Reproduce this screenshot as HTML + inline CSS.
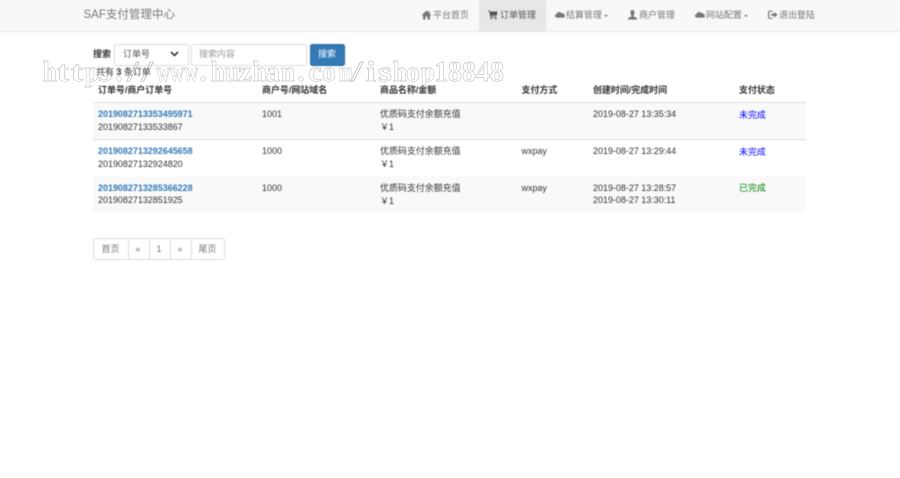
<!DOCTYPE html>
<html lang="zh-CN">
<head>
<meta charset="utf-8">
<title>订单管理</title>
<style>
html,body{margin:0;padding:0;background:#fff}
body{width:900px;height:478px;position:relative;overflow:hidden;font-family:"Liberation Sans","Noto Sans CJK SC",sans-serif;font-size:8.96px;line-height:12.8px;color:#333}
#w{position:absolute;left:0;top:0;width:900px;height:478px;filter:blur(.4px)}
.t{position:absolute;white-space:nowrap;line-height:12.8px}
.b{position:absolute;box-sizing:border-box}
.nav{color:#777}
.h{font-weight:bold}
.a{color:#337ab7;font-weight:bold}
svg{position:absolute;display:block}
.pg{color:#777;text-align:center}
#mark{position:absolute;left:42px;top:58.6px;white-space:nowrap;font-family:"Liberation Serif",serif;font-weight:bold;font-size:28px;line-height:28px;color:transparent;-webkit-text-stroke:.4px #a8a8a8;filter:blur(.15px)}
#mark span{display:inline-block;width:14px;text-align:center}
#mark .n{transform:scaleX(.92)}
#mark .v{transform:scaleX(.7)}
#mark .m{transform:scaleX(.6)}
#mark .s{transform:scaleX(1.5)}
#mark .l{transform:scaleX(1.3)}
#mark .e{transform:scaleX(1.12)}
</style>
</head>
<body>
<div id="w">
<div class="b" style="left:0;top:0;width:900px;height:32px;background:#f8f8f8;border-bottom:1px solid #e7e7e7"></div>
<div class="t" style="left:83.5px;top:9px;font-size:11.52px;color:#777">SAF支付管理中心</div>
<div class="b" style="left:479px;top:0;width:67px;height:31.5px;background:#e7e7e7"></div>

<svg style="left:421px;top:10px" width="11" height="10" viewBox="0 0 11 10"><path d="M5.5 0.5L0.5 5.2H2V9.5H4.5V6.5H6.5V9.5H9V5.2H10.5L8.5 3.3V1H7.5V2.4Z" fill="#777"/></svg>
<div class="t nav" style="left:433px;top:9px">平台首页</div>
<svg style="left:488px;top:10px" width="10" height="10" viewBox="0 0 10 10"><path d="M0 .5H1.8L2.3 1.5H9.5L8.7 5.8H3L3.2 6.7H8.6V7.6H2.4L1.2 1.4H0Z" fill="#555"/><circle cx="3.2" cy="8.7" r=".8" fill="#555"/><circle cx="7.8" cy="8.7" r=".8" fill="#555"/></svg>
<div class="t" style="left:500px;top:9px;color:#555">订单管理</div>
<svg style="left:555px;top:11px" width="10" height="8" viewBox="0 0 10 8"><path d="M2 6.6C.8 6.6 0 5.8 0 4.8 0 3.8.7 3.2 1.6 3.1 1.9 1.8 3 1 4.2 1 5.2 1 6 1.5 6.5 2.3 6.8 2.2 7 2.1 7.3 2.1 8.3 2.1 9 2.8 9 3.6 9.6 3.8 10 4.5 10 5.1 10 5.9 9.3 6.6 8.4 6.6Z" fill="#777"/></svg>
<div class="t nav" style="left:566px;top:9px">结算管理</div>
<div class="b" style="left:604px;top:15px;border-top:2.5px solid #777;border-left:2.5px solid transparent;border-right:2.5px solid transparent"></div>
<svg style="left:628px;top:10px" width="9" height="10" viewBox="0 0 9 10"><path d="M4.5 0C6 0 6.6 1.1 6.5 2.6 6.4 4 5.9 5.2 5.6 5.6V6.5L9 8V9.6H0V8L3.4 6.5V5.6C3.1 5.2 2.6 4 2.5 2.6 2.4 1.1 3 0 4.5 0Z" fill="#777"/></svg>
<div class="t nav" style="left:639px;top:9px">商户管理</div>
<svg style="left:695px;top:11px" width="10" height="8" viewBox="0 0 10 8"><path d="M2 6.6C.8 6.6 0 5.8 0 4.8 0 3.8.7 3.2 1.6 3.1 1.9 1.8 3 1 4.2 1 5.2 1 6 1.5 6.5 2.3 6.8 2.2 7 2.1 7.3 2.1 8.3 2.1 9 2.8 9 3.6 9.6 3.8 10 4.5 10 5.1 10 5.9 9.3 6.6 8.4 6.6Z" fill="#777"/></svg>
<div class="t nav" style="left:706px;top:9px">网站配置</div>
<div class="b" style="left:743.5px;top:15px;border-top:2.5px solid #777;border-left:2.5px solid transparent;border-right:2.5px solid transparent"></div>
<svg style="left:768px;top:10px" width="10" height="10" viewBox="0 0 10 10"><path d="M4.5 1.2H1.6C1 1.2.6 1.6.6 2.2V7.3C.6 7.9 1 8.3 1.6 8.3H4.5" fill="none" stroke="#777" stroke-width="1.2"/><path d="M3.2 3.7H6V1.8L9.6 4.8 6 7.7V5.8H3.2Z" fill="#777"/></svg>
<div class="t nav" style="left:779px;top:9px">退出登陆</div>

<div class="t h" style="left:93px;top:47.5px">搜索</div>
<div class="b" style="left:113.5px;top:43.5px;width:75px;height:22px;border:1px solid #ddd;border-radius:2.5px;background:#fff"></div>
<div class="t" style="left:123px;top:47.5px;color:#555">订单号</div>
<svg style="left:170px;top:51px" width="9" height="6" viewBox="0 0 9 6"><path d="M1 1L4.5 4.5 8 1" fill="none" stroke="#222" stroke-width="1.5"/></svg>
<div class="b" style="left:191px;top:43.5px;width:116px;height:22px;border:1px solid #ddd;border-radius:2.5px;background:#fff"></div>
<div class="t" style="left:199px;top:48px;color:#999">搜索内容</div>
<div class="b" style="left:309.5px;top:43.5px;width:35px;height:22px;border:1px solid #2e6da4;border-radius:2.5px;background:#337ab7"></div>
<div class="t" style="left:318px;top:48px;color:#fff">搜索</div>

<div class="t" style="left:96px;top:66px">共有 <b>3</b> 条订单</div>

<div class="t h" style="left:98px;top:84px">订单号/商户订单号</div>
<div class="t h" style="left:262px;top:84px">商户号/网站域名</div>
<div class="t h" style="left:380px;top:84px">商品名称/金额</div>
<div class="t h" style="left:521.5px;top:84px">支付方式</div>
<div class="t h" style="left:593px;top:84px">创建时间/完成时间</div>
<div class="t h" style="left:739px;top:84px">支付状态</div>
<div class="b" style="left:93px;top:102px;width:713px;height:1.3px;background:#ddd"></div>

<div class="b" style="left:93px;top:103px;width:713px;height:36px;background:#f9f9f9"></div>
<div class="b" style="left:93px;top:139px;width:713px;height:1px;background:#ddd"></div>
<div class="b" style="left:93px;top:175.5px;width:713px;height:.7px;background:#ddd"></div>
<div class="b" style="left:93px;top:176px;width:713px;height:36px;background:#f9f9f9"></div>

<div class="t a" style="left:98px;top:107.5px">2019082713353495971</div>
<div class="t" style="left:98px;top:120.5px">20190827133533867</div>
<div class="t" style="left:262px;top:107.5px">1001</div>
<div class="t" style="left:380px;top:108px">优质码支付余额充值</div>
<div class="t" style="left:380px;top:121px">￥1</div>
<div class="t" style="left:593px;top:107.5px">2019-08-27 13:35:34</div>
<div class="t" style="left:739px;top:108.5px;color:#00f">未完成</div>

<div class="t a" style="left:98px;top:144.5px">2019082713292645658</div>
<div class="t" style="left:98px;top:157.5px">20190827132924820</div>
<div class="t" style="left:262px;top:145px">1000</div>
<div class="t" style="left:380px;top:145px">优质码支付余额充值</div>
<div class="t" style="left:380px;top:158px">￥1</div>
<div class="t" style="left:521.5px;top:145px">wxpay</div>
<div class="t" style="left:593px;top:145px">2019-08-27 13:29:44</div>
<div class="t" style="left:739px;top:145.5px;color:#00f">未完成</div>

<div class="t a" style="left:98px;top:181.5px">2019082713285366228</div>
<div class="t" style="left:98px;top:194px">20190827132851925</div>
<div class="t" style="left:262px;top:181.5px">1000</div>
<div class="t" style="left:380px;top:182px">优质码支付余额充值</div>
<div class="t" style="left:380px;top:194.5px">￥1</div>
<div class="t" style="left:521.5px;top:181.5px">wxpay</div>
<div class="t" style="left:593px;top:181.5px">2019-08-27 13:28:57</div>
<div class="t" style="left:593px;top:194px">2019-08-27 13:30:11</div>
<div class="t" style="left:739px;top:182px;color:#008000">已完成</div>

<div class="b" style="left:93px;top:238px;width:132px;height:22px;border:1px solid #ddd;border-radius:2.5px;background:#fff"></div>
<div class="b" style="left:127.5px;top:238px;width:1px;height:22px;background:#ddd"></div>
<div class="b" style="left:148.5px;top:238px;width:1px;height:22px;background:#ddd"></div>
<div class="b" style="left:169.5px;top:238px;width:1px;height:22px;background:#ddd"></div>
<div class="b" style="left:190.5px;top:238px;width:1px;height:22px;background:#ddd"></div>
<div class="t pg" style="left:94px;top:242.5px;width:33px">首页</div>
<div class="t pg" style="left:128px;top:242.5px;width:20px">«</div>
<div class="t pg" style="left:149px;top:242.5px;width:20px">1</div>
<div class="t pg" style="left:170px;top:242.5px;width:20px">»</div>
<div class="t pg" style="left:191px;top:242.5px;width:33px">尾页</div>
</div>
<div id="mark"><span class="n">h</span><span class="l">t</span><span class="l">t</span><span class="n">p</span><span class="l">s</span><span>:</span><span class="s">/</span><span class="s">/</span><span class="v">w</span><span class="v">w</span><span class="v">w</span><span>.</span><span class="n">h</span><span class="n">u</span><span class="e">z</span><span class="n">h</span><span>a</span><span class="n">n</span><span>.</span><span class="e">c</span><span>o</span><span class="m">m</span><span class="s">/</span><span class="l">i</span><span class="l">s</span><span class="n">h</span><span>o</span><span class="n">p</span><span>1</span><span>8</span><span>8</span><span>4</span><span>8</span></div>
</body>
</html>
